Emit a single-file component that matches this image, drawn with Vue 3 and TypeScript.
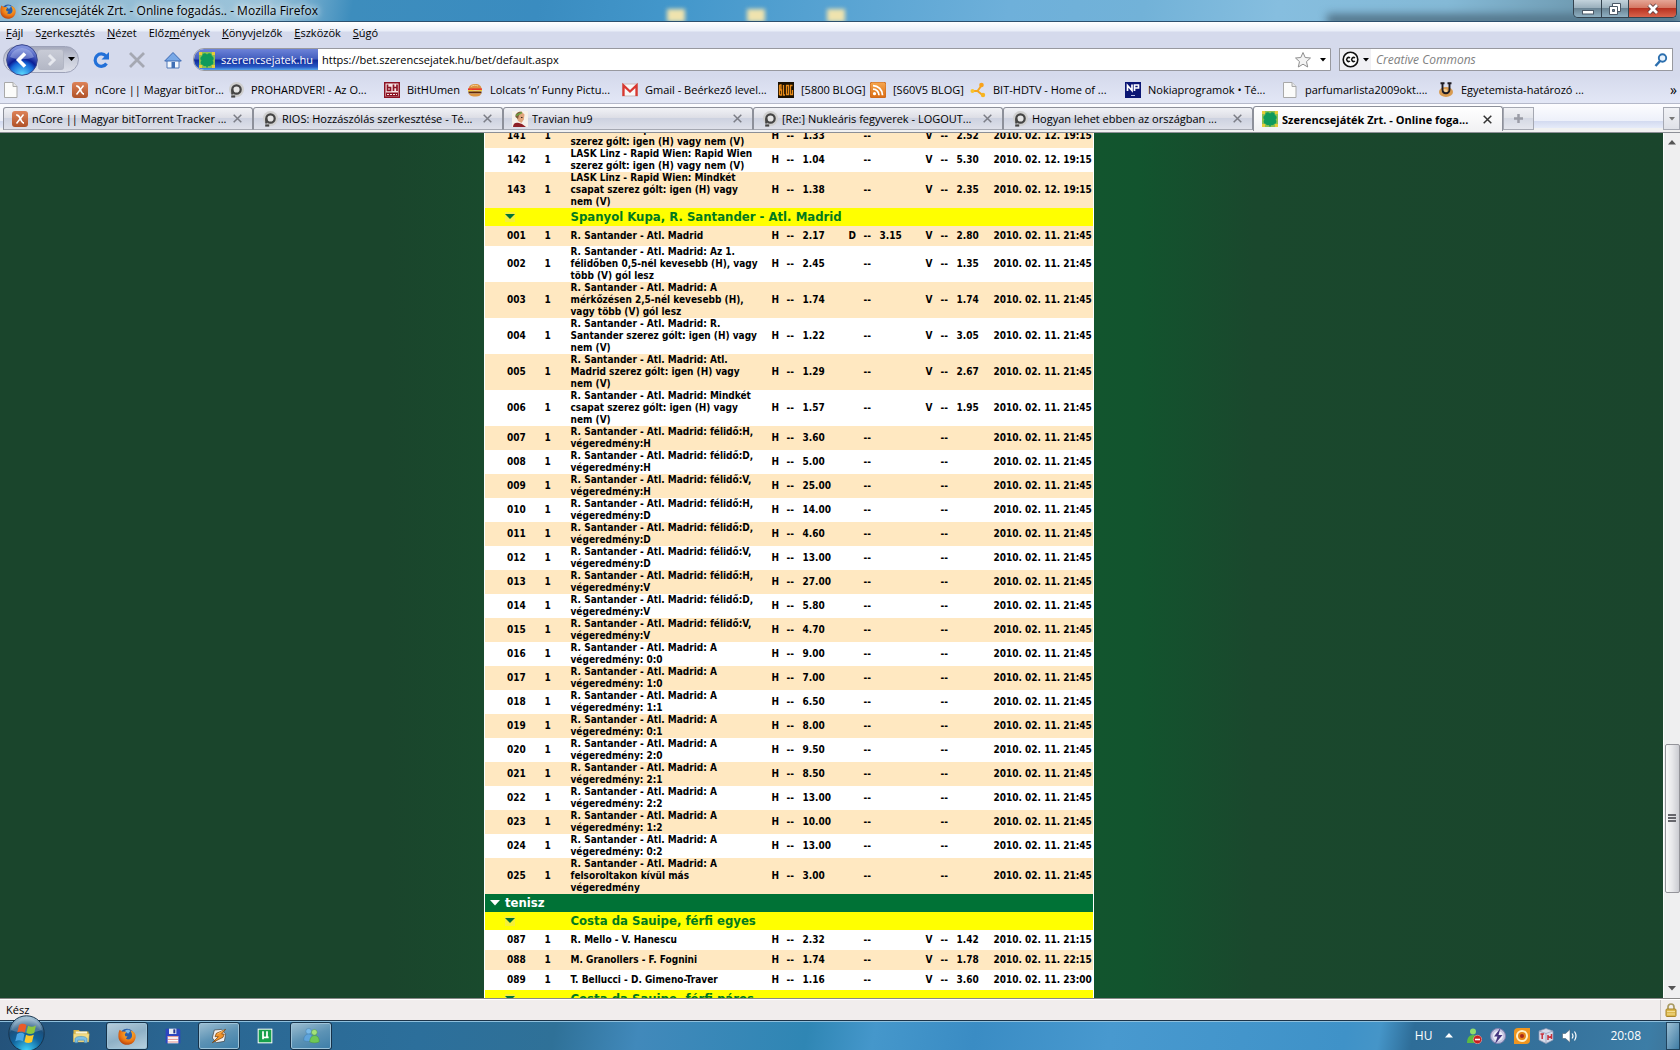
<script setup lang="ts">
import { ref } from 'vue'

interface MenuItem { before: string; key: string; after: string }
interface Bookmark { icon: string; label: string; width: number }
interface Tab { icon: string; label: string; active?: boolean }
interface Row {
  kind: 'bet' | 'league' | 'sport'
  id: string
  name: string
  h?: string
  d?: string
  v?: string
  date?: string
}

const menu: MenuItem[] = [
  { before: '', key: 'F', after: 'ájl' },
  { before: 'S', key: 'z', after: 'erkesztés' },
  { before: '', key: 'N', after: 'ézet' },
  { before: 'Előz', key: 'm', after: 'ények' },
  { before: '', key: 'K', after: 'önyvjelzők' },
  { before: '', key: 'E', after: 'szközök' },
  { before: '', key: 'S', after: 'úgó' },
]

const bookmarks: Bookmark[] = [
  { icon: 'page', label: 'T.G.M.T', width: 69 },
  { icon: 'ncore', label: 'nCore || Magyar bitTor...', width: 156 },
  { icon: 'prohw', label: 'PROHARDVER! - Az O...', width: 156 },
  { icon: 'bithu', label: 'BitHUmen', width: 83 },
  { icon: 'burger', label: 'Lolcats ‘n’ Funny Pictu...', width: 155 },
  { icon: 'gmail', label: 'Gmail - Beérkező level...', width: 156 },
  { icon: 'blog', label: '[5800 BLOG]', width: 92 },
  { icon: 'rss', label: '[S60V5 BLOG]', width: 100 },
  { icon: 'hdtv', label: 'BIT-HDTV - Home of ...', width: 155 },
  { icon: 'np', label: 'Nokiaprogramok • Té...', width: 157 },
  { icon: 'page', label: 'parfumarlista2009okt....', width: 156 },
  { icon: 'ubun', label: 'Egyetemista-határozó ...', width: 156 },
]

const tabs: Tab[] = [
  { icon: 'ncore', label: 'nCore || Magyar bitTorrent Tracker ...' },
  { icon: 'prohw', label: 'RIOS: Hozzászólás szerkesztése - Té...' },
  { icon: 'travian', label: 'Travian hu9' },
  { icon: 'prohw', label: '[Re:] Nukleáris fegyverek - LOGOUT...' },
  { icon: 'prohw', label: 'Hogyan lehet ebben az országban ...' },
  { icon: 'clover', label: 'Szerencsejáték Zrt. - Online foga...', active: true },
]

const linz = '2010. 02. 12. 19:15'
const cup = '2010. 02. 11. 21:45'
const match = 'R. Santander - Atl. Madrid'

function bet(id: string, name: string, h: string, v = '', date = cup, d = ''): Row {
  return { kind: 'bet', id, name, h, d, v, date }
}

const rows: Row[] = [
  bet('141', 'LASK Linz - Rapid Wien: LASK Linz\nszerez gólt: igen (H) vagy nem (V)', '1.33', '2.52', linz),
  bet('142', 'LASK Linz - Rapid Wien: Rapid Wien\nszerez gólt: igen (H) vagy nem (V)', '1.04', '5.30', linz),
  bet('143', 'LASK Linz - Rapid Wien: Mindkét\ncsapat szerez gólt: igen (H) vagy\nnem (V)', '1.38', '2.35', linz),
  { kind: 'league', id: 'l1', name: 'Spanyol Kupa, R. Santander - Atl. Madrid' },
  bet('001', match, '2.17', '2.80', cup, '3.15'),
  bet('002', `${match}: Az 1.\nfélidőben 0,5-nél kevesebb (H), vagy\ntöbb (V) gól lesz`, '2.45', '1.35'),
  bet('003', `${match}: A\nmérkőzésen 2,5-nél kevesebb (H),\nvagy több (V) gól lesz`, '1.74', '1.74'),
  bet('004', `${match}: R.\nSantander szerez gólt: igen (H) vagy\nnem (V)`, '1.22', '3.05'),
  bet('005', `${match}: Atl.\nMadrid szerez gólt: igen (H) vagy\nnem (V)`, '1.29', '2.67'),
  bet('006', `${match}: Mindkét\ncsapat szerez gólt: igen (H) vagy\nnem (V)`, '1.57', '1.95'),
  bet('007', `${match}: félidő:H,\nvégeredmény:H`, '3.60'),
  bet('008', `${match}: félidő:D,\nvégeredmény:H`, '5.00'),
  bet('009', `${match}: félidő:V,\nvégeredmény:H`, '25.00'),
  bet('010', `${match}: félidő:H,\nvégeredmény:D`, '14.00'),
  bet('011', `${match}: félidő:D,\nvégeredmény:D`, '4.60'),
  bet('012', `${match}: félidő:V,\nvégeredmény:D`, '13.00'),
  bet('013', `${match}: félidő:H,\nvégeredmény:V`, '27.00'),
  bet('014', `${match}: félidő:D,\nvégeredmény:V`, '5.80'),
  bet('015', `${match}: félidő:V,\nvégeredmény:V`, '4.70'),
  bet('016', `${match}: A\nvégeredmény: 0:0`, '9.00'),
  bet('017', `${match}: A\nvégeredmény: 1:0`, '7.00'),
  bet('018', `${match}: A\nvégeredmény: 1:1`, '6.50'),
  bet('019', `${match}: A\nvégeredmény: 0:1`, '8.00'),
  bet('020', `${match}: A\nvégeredmény: 2:0`, '9.50'),
  bet('021', `${match}: A\nvégeredmény: 2:1`, '8.50'),
  bet('022', `${match}: A\nvégeredmény: 2:2`, '13.00'),
  bet('023', `${match}: A\nvégeredmény: 1:2`, '10.00'),
  bet('024', `${match}: A\nvégeredmény: 0:2`, '13.00'),
  bet('025', `${match}: A\nfelsoroltakon kívül más\nvégeredmény`, '3.00'),
  { kind: 'sport', id: 's1', name: 'tenisz' },
  { kind: 'league', id: 'l2', name: 'Costa da Sauipe, férfi egyes' },
  bet('087', 'R. Mello - V. Hanescu', '2.32', '1.42', '2010. 02. 11. 21:15'),
  bet('088', 'M. Granollers - F. Fognini', '1.74', '1.78', '2010. 02. 11. 22:15'),
  bet('089', 'T. Bellucci - D. Gimeno-Traver', '1.16', '3.60', '2010. 02. 11. 23:00'),
  { kind: 'league', id: 'l3', name: 'Costa da Sauipe, férfi páros' },
]

const shaded = new Set<string>(
  rows.filter((r) => r.kind === 'bet' && (r.id === '088' || (Number(r.id) % 2 === 1 && !['087', '089'].includes(r.id)))).map((r) => r.id),
)

const address = ref('https://bet.szerencsejatek.hu/bet/default.aspx')
const query = ref('')
</script>

<template>
  <svg class="defs" aria-hidden="true">
    <defs>
      <linearGradient id="gOrange" x1="0" y1="0" x2="0" y2="1"><stop offset="0" stop-color="#dd8258" /><stop offset="1" stop-color="#b05228" /></linearGradient>
      <linearGradient id="gRss" x1="0" y1="0" x2="0" y2="1"><stop offset="0" stop-color="#f7a850" /><stop offset="1" stop-color="#d96a12" /></linearGradient>
      <radialGradient id="gBack" cx="0.5" cy="1" r="0.9"><stop offset="0" stop-color="#5fe2ff" /><stop offset="0.45" stop-color="#1668d8" /><stop offset="0.6" stop-color="#0b1f96" /><stop offset="1" stop-color="#7d8fdc" /></radialGradient>
      <radialGradient id="gOrb" cx="0.5" cy="1" r="1"><stop offset="0" stop-color="#3fd6ff" /><stop offset="0.45" stop-color="#11639c" /><stop offset="0.7" stop-color="#1b4f7c" /><stop offset="1" stop-color="#b8d4e4" /></radialGradient>
      <radialGradient id="gFox" cx="0.6" cy="0.3" r="0.8"><stop offset="0" stop-color="#ffc23a" /><stop offset="0.6" stop-color="#ea7413" /><stop offset="1" stop-color="#a83208" /></radialGradient>
      <symbol id="i-page" viewBox="0 0 16 16"><path d="M1.500 0.500h8.500l4 4v11H1.500z" fill="#fbfbfa" stroke="#a9a9a9" /><path d="M10 .5v4h4" fill="#e6e6e6" stroke="#a9a9a9" /></symbol>
      <symbol id="i-ncore" viewBox="0 0 16 16"><rect width="16" height="16" rx="3" fill="url(#gOrange)" /><path d="M4.200 4.200c2.200-.5 3 .8 4 3.200s1.800 4.600 3.800 4.600" fill="none" stroke="#fff" stroke-width="1.800" /><path d="M11.500 3.500L4.500 12.500" stroke="#fff" stroke-width="1.500" /></symbol>
      <symbol id="i-prohw" viewBox="0 0 16 16"><circle cx="8.500" cy="7.500" r="7.500" fill="#cfcfcf" /><circle cx="8.500" cy="7.500" r="4.200" fill="#e4e4e4" stroke="#454545" stroke-width="2.200" /><path d="M4.300 7.500v5" stroke="#454545" stroke-width="2.200" /><path d="M3.200 14.500h4" stroke="#454545" stroke-width="2.200" /></symbol>
      <symbol id="i-bithu" viewBox="0 0 16 16"><rect width="16" height="16" fill="#8c1223" /><rect x="1.500" y="1.500" width="13" height="13" fill="#f6e4e4" /><path d="M3.500 2.500v6h3v-3h-3M9.500 2.500v6.500M13 2.500v6.500M9.500 5.500h3.500" fill="none" stroke="#8c1223" stroke-width="1.700" /><path d="M2 10.500h12v4H2z" fill="#8c1223" /><path d="M3 12.500h10" stroke="#f6e4e4" stroke-dasharray="2 1" /></symbol>
      <symbol id="i-burger" viewBox="0 0 16 16"><path d="M1.500 7C2 3 5 2 8.500 2s6 2 6 5z" fill="#dc9440" /><path d="M4 4.500c2-1.500 5-1.500 7-.5" stroke="#f4ce90" fill="none" /><path d="M1 7.300h14" stroke="#e8372a" stroke-width="1.800" /><path d="M1 9.300l3-.8 4 1 7-1" stroke="#f3cb34" stroke-width="1.600" fill="none" /><path d="M1.500 10.500h13" stroke="#5e2810" stroke-width="2" /><path d="M2 11.500h12c0 2-2 3-5 3s-7-.5-7-3z" fill="#dc9440" /></symbol>
      <symbol id="i-gmail" viewBox="0 0 16 16"><rect x=".5" y="2" width="15" height="12" fill="#f7f7f7" stroke="#c9b9b9" /><path d="M1.500 14V3.500L8 9.500l6.500-6V14" fill="none" stroke="#d93831" stroke-width="2.300" /></symbol>
      <symbol id="i-blog" viewBox="0 0 16 16"><rect width="16" height="16" fill="#1a1002" /><path d="M1.500 3v10M1.500 3h1.500v4.500h-1.500M1.500 8H3.500v5H1.500M5.500 3v10h1.500M8.500 3.500h2v9h-2zM14.500 3.500h-2v9h2V8" fill="none" stroke="#e78b1a" stroke-width="1.300" /></symbol>
      <symbol id="i-rss" viewBox="0 0 16 16"><rect width="16" height="16" rx="2.500" fill="url(#gRss)" stroke="#c8651c" /><circle cx="4.500" cy="11.700" r="1.600" fill="#fff" /><path d="M3 7.200a6 6 0 0 1 6 6M3 3.700a9.500 9.500 0 0 1 9.500 9.500" fill="none" stroke="#fff" stroke-width="1.800" /></symbol>
      <symbol id="i-hdtv" viewBox="0 0 16 16"><path d="M2.500 9h5L11.500 3.500M7.500 9l5 4" fill="none" stroke="#f5a51d" stroke-width="2" /><circle cx="2.500" cy="9" r="2" fill="#f9c22b" /><circle cx="11.500" cy="3" r="2.300" fill="#f9a21b" /><circle cx="13" cy="13" r="2.200" fill="#f7b521" /></symbol>
      <symbol id="i-np" viewBox="0 0 16 16"><rect width="16" height="16" fill="#0b1674" /><path d="M2.500 9V3.500l4.500 5V2.500M9.500 9V3h4v3h-4" fill="none" stroke="#fff" stroke-width="1.700" /><path d="M6 13.500h4" stroke="#b9bfe8" /></symbol>
      <symbol id="i-ubun" viewBox="0 0 16 16"><ellipse cx="8" cy="10" rx="7" ry="5" fill="#d99b50" /><ellipse cx="6.500" cy="9" rx="3" ry="2" fill="#f2cd92" /><path d="M4.500 1v6.500c0 5 7 5 7 0V1M2.500 1.300h4M9.500 1.300h4" fill="none" stroke="#1e1b22" stroke-width="1.900" /></symbol>
      <symbol id="i-travian" viewBox="0 0 16 16"><rect width="16" height="16" fill="#f6f1ea" /><path d="M4 5c0-3 3-5 6-4l2.500 2.500-.7 5L9.500 12 6 10z" fill="#e0a57c" /><path d="M3.500 6c-.5-3 2-6 6.500-5.200L7 4l-1 4z" fill="#7c5a36" /><path d="M4 4.500l6-3" stroke="#6da044" stroke-width="1.500" /><path d="M1 16c0-4 3-5 6-4l3 1 4 3z" fill="#8e1f26" /><path d="M9 6.500h1.500" stroke="#3a2a20" /></symbol>
      <symbol id="i-clover" viewBox="0 0 16 16"><rect width="16" height="16" fill="#e8cc38" /><path d="M3 0h10v16H3zM0 3h16v10H0z" fill="#8cc050" /><g fill="#0f9a5c"><circle cx="5.700" cy="3.800" r="2.500" /><circle cx="10.300" cy="3.800" r="2.500" /><circle cx="3.900" cy="6.500" r="2.500" /><circle cx="12.100" cy="6.500" r="2.500" /><circle cx="4.200" cy="10.500" r="2.500" /><circle cx="11.800" cy="10.500" r="2.500" /><circle cx="6" cy="12" r="2.300" /><circle cx="10" cy="12" r="2.300" /><rect x="4.500" y="4" width="7" height="8.500" /><path d="M7.200 12h1.600v3.500H7.200z" /></g></symbol>
      <symbol id="i-fox" viewBox="0 0 16 16"><circle cx="8" cy="8" r="6.500" fill="#2a5ea8" /><path d="M6 3.500c2-1.500 4-1 5 0L9 6z" fill="#7db8e4" /><path d="M1.500 2.500L4 4.300c1.500-.8 2.500 0 3.500.2L6 6.500l.5 1.800 2 .2-1.500 1.800c2 1.500 5 .8 5.500-2.300.2-2-.7-3.500-1.500-5C14 3.500 16 6 15.700 9c-.4 4-3.700 6.800-7.700 6.800S.6 12.600.4 8.800C.3 6.200.5 4 1.500 2.500z" fill="url(#gFox)" /></symbol>
      <symbol id="i-explorer" viewBox="0 0 24 24"><path d="M2 4h7l2 2h11v14H2z" fill="#d8b54a" /><path d="M5 6h15v5H5z" fill="#f6f3d8" /><path d="M2 9h21l-1 11H2z" fill="#f3dd86" stroke="#c9a844" stroke-width=".6" /><path d="M4 21v-5c0-2 3-3.500 8-3.500S20 14 20 16v5h-3.500v-3.500h-9V21z" fill="#7cc0e6" stroke="#3f88b8" stroke-width=".8" /></symbol>
      <symbol id="i-floppy" viewBox="0 0 24 24"><path d="M1 1h20l2 2v20H1z" fill="#2c45c0" /><rect x="6" y="1" width="11" height="8" fill="#e9edf3" /><rect x="12.500" y="2" width="3" height="6" fill="#23358f" /><rect x="4" y="12" width="16" height="11" fill="#fff" /><path d="M4 13h16M4 17h16M4 21h16" stroke="#c84b4b" stroke-width="1" /></symbol>
      <symbol id="i-winamp" viewBox="0 0 24 24"><path d="M5 3l11-1 6 7-2 11-12 2-6-7z" fill="#efefef" stroke="#3a3a3a" /><path d="M22 2L8 8l-2 5h5L2 22l16-8 2-5h-4z" fill="#f1932a" stroke="#6b3a0a" /><path d="M19 3.500L9.500 9" stroke="#ffd894" /></symbol>
      <symbol id="i-torrent" viewBox="0 0 24 24"><rect x="1" y="1" width="22" height="22" fill="#fff" /><rect x="2.500" y="2.500" width="19" height="19" fill="#17a04b" /><path d="M9 5v12M9 6v6c0 3 6 3 6 0V5v9h2.500" fill="none" stroke="#fff" stroke-width="2.600" /></symbol>
      <symbol id="i-msn" viewBox="0 0 24 24"><circle cx="8" cy="6" r="4" fill="#79b9e8" stroke="#3b78a8" stroke-width=".6" /><path d="M1 19c0-6 3-9 7-9s6 3 6 9c-4 2-9 2-13 0z" fill="#5fa4dc" stroke="#3b78a8" stroke-width=".6" /><circle cx="16" cy="7.500" r="4" fill="#a4e27a" stroke="#3e8c3a" stroke-width=".6" /><path d="M9.500 21c0-6 3-9 7-9s6.500 3 6.500 9c-4 2-9.500 2-13.500 0z" fill="#6fc856" stroke="#3e8c3a" stroke-width=".6" /></symbol>
    </defs>
  </svg>

  <div class="desktop">
    <header class="titlebar">
      <i class="ghost g1"></i><i class="ghost g2"></i><i class="ghost g3"></i><i class="shade"></i>
      <svg class="ico"><use href="#i-fox" /></svg>
      <h1 class="title">Szerencsejáték Zrt. - Online fogadás.. - Mozilla Firefox</h1>
      <div class="winctl">
        <button class="wc min" aria-label="Kis méret"><svg width="14" height="14" viewBox="0 0 14 14"><rect x="1.500" y="8.500" width="11" height="3.500" fill="#fff" stroke="#4b5866" /></svg></button>
        <button class="wc res" aria-label="Előző méret"><svg width="14" height="14" viewBox="0 0 14 14"><path d="M4.500 1.500h8v8h-8z" fill="#fff" stroke="#4b5866" /><path d="M1.500 4.500h8v8h-8z" fill="#fff" stroke="#4b5866" /><path d="M4.500 7.500h2v2h-2z" fill="#6f8797" stroke="#4b5866" /></svg></button>
        <button class="wc cls" aria-label="Bezárás"><svg width="14" height="14" viewBox="0 0 14 14"><path d="M3 3l8 8M11 3l-8 8" stroke="#5b3a3c" stroke-width="4.500" /><path d="M3 3l8 8M11 3l-8 8" stroke="#fff" stroke-width="2.800" /></svg></button>
      </div>
    </header>

    <nav class="menubar">
      <button v-for="m in menu" :key="m.after" class="menuitem">{{ m.before }}<u>{{ m.key }}</u>{{ m.after }}</button>
    </nav>

    <div class="navbar">
      <div class="pill">
        <button class="back" aria-label="Vissza"><svg width="32" height="32" viewBox="0 0 32 32"><circle cx="16" cy="16" r="15.300" fill="url(#gBack)" stroke="#39468c" /><path d="M4 13a12.500 12.500 0 0 1 24 0c-7 3-17 3-24 0z" fill="#b9c6f2" opacity=".45" /><path d="M19 9.500L12.500 16l6.500 6.500" fill="none" stroke="#fff" stroke-width="3.600" /></svg></button>
        <button class="fwd" aria-label="Előre" disabled><svg width="14" height="16" viewBox="0 0 14 16"><path d="M5 3l5 5-5 5" fill="none" stroke="#e6e8ee" stroke-width="3" /></svg></button>
        <button class="caret" aria-label="Előzmények listája"><svg width="8" height="5" viewBox="0 0 8 5"><path d="M0 0h7L3.500 4z" /></svg></button>
      </div>
      <button class="tool" aria-label="Frissítés"><svg width="18" height="18" viewBox="0 0 18 18"><path d="M14.500 12.500a6.200 6.200 0 1 1-.5-7.500" fill="none" stroke="#2270d8" stroke-width="3.200" /><path d="M17 1v7.500h-7.500z" fill="#2270d8" /></svg></button>
      <button class="tool" aria-label="Leállítás"><svg width="18" height="18" viewBox="0 0 18 18"><path d="M2 2l14 14M16 2L2 16" stroke="#a5a8b2" stroke-width="2.800" /></svg></button>
      <button class="tool" aria-label="Kezdőlap"><svg width="18" height="18" viewBox="0 0 18 18"><path d="M3 9h12v8H3z" fill="#f4f8fd" stroke="#5079b8" /><path d="M9 1.500L17.300 10H.7z" fill="#78a8e6" stroke="#3b68b2" /><rect x="7.500" y="11" width="3.500" height="6" fill="#3f6fb5" /></svg></button>
      <div class="urlbar">
        <button class="identity"><svg class="ico"><use href="#i-clover" /></svg>szerencsejatek.hu</button>
        <input v-model="address" class="addr" aria-label="Cím" />
        <button class="bare star" aria-label="Könyvjelző"><svg width="18" height="18" viewBox="0 0 18 18"><path d="M9 1.500l2.200 5 5.300.5-4 3.600 1.200 5.400L9 13.200 4.300 16l1.200-5.400-4-3.600 5.300-.5z" fill="#f3f3f3" stroke="#8f8f8f" /></svg></button>
        <button class="bare" aria-label="Címek"><svg width="6" height="4" viewBox="0 0 6 4"><path d="M0 0h6L3 3.500z" /></svg></button>
      </div>
      <div class="search">
        <button class="engine" aria-label="Keresőszolgáltatás"><svg width="17" height="17" viewBox="0 0 17 17"><circle cx="8.500" cy="8.500" r="7.300" fill="#fff" stroke="#111" stroke-width="1.600" /><path d="M8 7a2 2 0 1 0 0 3M13 7a2 2 0 1 0 0 3" fill="none" stroke="#111" stroke-width="1.500" /></svg><svg width="6" height="4" viewBox="0 0 6 4"><path d="M0 0h6L3 3.500z" /></svg></button>
        <input v-model="query" class="query" placeholder="Creative Commons" aria-label="Keresés" />
        <button class="bare" aria-label="Keresés indítása"><svg width="14" height="14" viewBox="0 0 14 14"><circle cx="8.500" cy="5" r="3.700" fill="#e8f2fc" stroke="#2c6fae" stroke-width="1.900" /><path d="M6 8l-4.500 5" stroke="#2c6fae" stroke-width="2.500" /></svg></button>
      </div>
    </div>

    <div class="bookmarks">
      <a v-for="b in bookmarks" :key="b.label" href="#" class="bm" :style="{ width: b.width + 'px' }">
        <svg class="ico"><use :href="'#i-' + b.icon" /></svg><span>{{ b.label }}</span>
      </a>
      <button class="more" aria-label="További könyvjelzők">»</button>
    </div>

    <div class="tabs">
      <div v-for="t in tabs" :key="t.label" class="tab" :class="{ active: t.active }">
        <svg class="ico"><use :href="'#i-' + t.icon" /></svg>
        <span class="tlabel">{{ t.label }}</span>
        <button class="close" aria-label="Lap bezárása"><svg width="9" height="9" viewBox="0 0 9 9"><path d="M.7 .7l7.600 7.600M8.300 .7L.7 8.300" stroke="currentColor" stroke-width="1.500" /></svg></button>
      </div>
      <button class="newtab" aria-label="Új lap"><svg width="9" height="9" viewBox="0 0 9 9"><path d="M4.500 0v9M0 4.500h9" stroke="#9a9ca6" stroke-width="2.500" /></svg></button>
      <button class="tablist" aria-label="Lapok listája"><svg width="6" height="4" viewBox="0 0 6 4"><path d="M0 0h6L3 3.500z" fill="#777" /></svg></button>
    </div>

    <main class="viewport">
      <div class="page">
        <div class="side left"></div>
        <table class="odds">
          <colgroup>
            <col class="c-id" /><col class="c-one" /><col class="c-name" />
            <col class="c-sym" /><col class="c-dash" /><col class="c-odd" />
            <col class="c-sym" /><col class="c-dash" /><col class="c-odd" />
            <col class="c-sym" /><col class="c-dash" /><col class="c-last" /><col />
          </colgroup>
          <tbody>
            <tr v-for="r in rows" :key="r.id" :class="[r.kind, { shaded: shaded.has(r.id) }]">
              <template v-if="r.kind === 'bet'">
                <td class="id">{{ r.id }}</td>
                <td class="one">1</td>
                <td class="name">{{ r.name }}</td>
                <td>H</td><td>--</td><td>{{ r.h }}</td>
                <td>{{ r.d ? 'D' : '' }}</td><td>--</td><td>{{ r.d }}</td>
                <td>{{ r.v ? 'V' : '' }}</td><td>--</td><td>{{ r.v }}</td>
                <td>{{ r.date }}</td>
              </template>
              <template v-else-if="r.kind === 'league'">
                <td colspan="2" class="toggle"><span class="box"><svg width="10" height="6" viewBox="0 0 10 6"><path d="M0 0h10L5 5z" fill="#007236" /></svg></span></td>
                <td colspan="11">{{ r.name }}</td>
              </template>
              <td v-else colspan="13"><svg width="10" height="6" viewBox="0 0 10 6"><path d="M0 0h10L5 5.500z" fill="#fff" /></svg>{{ r.name }}</td>
            </tr>
          </tbody>
        </table>
        <div class="side right"></div>
      </div>
      <div class="scroll">
        <svg width="8" height="5" viewBox="0 0 8 5"><path d="M0 4.500L4 0l4 4.500z" fill="#555" /></svg>
        <div class="gap upper"></div>
        <div class="thumb"><i></i><i></i><i></i></div>
        <div class="gap lower"></div>
        <svg width="8" height="5" viewBox="0 0 8 5"><path d="M0 0h8L4 4.500z" fill="#555" /></svg>
      </div>
    </main>

    <footer class="status">
      <span>Kész</span>
      <span class="lock"><svg width="12" height="14" viewBox="0 0 12 14"><path d="M3 7V4a3 3 0 0 1 6 0v3" fill="none" stroke="#a89a62" stroke-width="1.700" /><rect x="1" y="6" width="10" height="7.500" rx="1" fill="#dcb84c" stroke="#a8842a" /><path d="M2 8.500h8M2 11h8" stroke="#f3dd92" /></svg></span>
    </footer>

    <div class="taskbar">
      <button class="start" aria-label="Start"><svg width="37" height="37" viewBox="0 0 37 37"><circle cx="18.500" cy="18.500" r="17.700" fill="url(#gOrb)" stroke="#16344e" /><path d="M3 15a16 16 0 0 1 31 0c-8 3-22 4-31 0z" fill="#fff" opacity=".22" /><path d="M11 10c3-2 5-1.500 7.500 0l-1.700 7.500c-2.500-1.500-4.800-1.500-7.500 0z" fill="#ea5b2a" /><path d="M20 10.700c3 1.500 5 1.300 8-.2l-1.800 7.500c-3 1.500-5.300 1.300-7.800 0z" fill="#8cc63e" /><path d="M9 19c3-1.700 5-1.500 7.500 0l-1.700 7.300c-2.500-1.500-4.800-1.500-7.500 0z" fill="#4aa5e4" /><path d="M18 19.700c2.500 1.500 5 1.300 7.800 0L24 27c-3 1.500-5 1.300-7.500 0z" fill="#fbc82c" /></svg></button>
      <div class="apps">
        <button class="app" aria-label="Intéző"><svg width="18" height="18"><use href="#i-explorer" /></svg></button>
        <button class="app open front" aria-label="Firefox"><svg width="18" height="18"><use href="#i-fox" /></svg></button>
        <button class="app" aria-label="Lemez"><svg width="16" height="16"><use href="#i-floppy" /></svg></button>
        <button class="app open" aria-label="Winamp"><svg width="16" height="16"><use href="#i-winamp" /></svg></button>
        <button class="app" aria-label="Torrent"><svg width="16" height="16"><use href="#i-torrent" /></svg></button>
        <button class="app open" aria-label="Messenger"><svg width="17" height="17"><use href="#i-msn" /></svg></button>
      </div>
      <div class="tray">
        <span class="lang">HU</span>
        <svg class="up" width="8" height="5" viewBox="0 0 8 5"><path d="M0 4.500L4 0l4 4.500z" fill="#fff" /></svg>
        <svg width="16" height="16" viewBox="0 0 16 16"><circle cx="7" cy="3.500" r="3" fill="#8fdc6c" /><path d="M1 15c0-5 2-8 6-8s6 3 6 8z" fill="#5cba42" /><circle cx="11.500" cy="11.500" r="4.200" fill="#c91f1f" stroke="#f2b2b2" stroke-width=".6" /><path d="M9 11.500h5" stroke="#fff" stroke-width="1.600" /></svg>
        <svg width="16" height="16" viewBox="0 0 16 16"><circle cx="8" cy="8" r="7.500" fill="#c3c4e0" stroke="#7f80b0" /><circle cx="8" cy="8" r="5" fill="#ececf8" /><path d="M10.500 0L4 8.500h3.500L5 16l7.500-9H8.500z" fill="#43347e" /></svg>
        <svg width="16" height="16" viewBox="0 0 16 16"><path d="M4 0h12v12a4 4 0 0 1-4 4H0V4a4 4 0 0 1 4-4z" fill="#ef951f" /><circle cx="8" cy="8" r="6" fill="#fff0c8" /><circle cx="8" cy="8" r="4" fill="#e68417" /><circle cx="8" cy="8" r="2" fill="#a8281a" /></svg>
        <svg width="16" height="16" viewBox="0 0 16 16"><path d="M8 .5l7 2.500v9l-7 3.500L1 12V3z" fill="#d8dcea" stroke="#8e96b4" stroke-width=".7" /><path d="M1 3l7 2.500L15 3M8 5.500v10" fill="none" stroke="#8e96b4" stroke-width=".7" /><path d="M2.500 6h3.500M4.200 6v5M10 7v5M13.500 6v5M10 9.500l3.500-1" fill="none" stroke="#c8323c" stroke-width="1.500" /></svg>
        <svg width="16" height="16" viewBox="0 0 16 16"><path d="M.5 5.500h3L8 1.500v13l-4.500-4h-3z" fill="#fff" stroke="#4a6070" stroke-width=".6" /><path d="M10 5.500c1.200 1.500 1.200 3.500 0 5M12.500 3.500c2 3 2 6 0 9" fill="none" stroke="#fff" stroke-width="1.200" /></svg>
        <time class="clock">20:08</time>
        <button class="peek" aria-label="Asztal megjelenítése"></button>
      </div>
    </div>
  </div>
</template>

<style>
html,
body {
  margin: 0;
  overflow: hidden;
}
</style>

<style scoped>
* { box-sizing: border-box; }
button { border: 0; padding: 0; margin: 0; background: none; font: inherit; color: inherit; display: flex; align-items: center; justify-content: center; }
svg { display: block; flex: none; }
.defs { position: absolute; width: 0; height: 0; }
.ico { width: 16px; height: 16px; }

.desktop {
  display: flex;
  flex-direction: column;
  height: 100vh;
  font-family: "Open Sans", "Noto Sans", sans-serif;
  font-size: 11px;
  color: #000;
  white-space: nowrap;
}

.titlebar {
  position: relative;
  display: flex;
  align-items: center;
  height: 22px;
  border-bottom: 1px solid #2c506e;
  background: linear-gradient(100deg, #8db7d0 0, #9cc4da 16%, #3d8dbd 21%, #3a8cc0 32%, #4397cb 40%, #6eb0da 60%, #72b2d8 68%, #86bedf 76%, #84b9d6 86%, #6f9bb2 94%, #6f98ad 100%);
  overflow: hidden;
}
.titlebar .ico, .title, .winctl { position: relative; }
.title { margin: 0 0 0 5px; font-size: 12px; font-weight: 400; line-height: 20px; text-shadow: 0 0 6px #fff, 0 0 10px #fff; }
.ghost { position: absolute; top: 9px; width: 18px; height: 13px; background: #efe3ae; filter: blur(2px); }
.g1 { left: 40%; margin-left: -5px; }
.g2 { left: 44%; margin-left: 8px; }
.g3 { left: 49%; margin-left: 4px; }
.shade { position: absolute; top: 14px; right: 0; width: 21%; height: 12px; background: #53758a; filter: blur(4px); }
.winctl { display: flex; align-self: flex-start; margin: 0 3px 0 auto; height: 18px; border: 1px solid #33424e; border-top: 0; border-radius: 0 0 5px 5px; overflow: hidden; }
.wc { height: 17px; border-right: 1px solid #33424e; background: linear-gradient(#c3d3dc 0, #9bb0bd 45%, #6a8494 50%, #8fb0c2 100%); }
.min { width: 28px; }
.res { width: 27px; }
.cls { width: 47px; border-right: 0; background: linear-gradient(#e5a696 0, #d57964 45%, #b93220 50%, #d9644c 100%); }

.menubar { display: flex; align-items: center; gap: 12px; height: 21px; padding-left: 6px; background: linear-gradient(#fff 0, #e9eef8 9px, #d5daec 10px); line-height: 20px; }
.navbar { display: flex; align-items: center; height: 33px; padding: 0 7px 0 3px; background: #d5daec; }
.pill { display: flex; align-items: center; width: 76px; height: 27px; border: 1px solid #9da2b8; border-radius: 14px; background: linear-gradient(#a5a9bc, #c9cdda 50%, #dde0ea); }
.back { width: 32px; margin-left: 2px; }
.fwd { width: 26px; height: 21px; border: 1px solid #b2b6c4; border-left: 0; border-radius: 3px; background: linear-gradient(#c8cbd6, #b4b8c6); }
.caret { margin-left: 4px; }
.tool { width: 18px; margin-left: 18px; }
.pill + .tool { margin-left: 13px; }
.tool + .urlbar { margin-left: 11px; }
.urlbar { display: flex; flex: 1; align-items: center; height: 23px; border: 1px solid #98999f; border-radius: 11px 0 0 11px; background: #fff; }
.identity { width: 124px; height: 21px; gap: 6px; border-radius: 10px 0 0 10px; color: #fff; background: linear-gradient(#6d83d8 0, #4560c0 45%, #0f2c9c 55%, #2858c4 85%, #58a8ec 100%); }
.addr, .query { flex: 1; min-width: 0; height: 20px; border: 0; padding: 0 0 0 4px; outline: 0; background: none; font: inherit; }
.bare { margin-right: 4px; }
.star { margin-right: 8px; }
.search { display: flex; align-items: center; width: 20%; height: 23px; margin-left: 8px; border: 1px solid #98999f; background: #fff; }
.engine { width: 31px; height: 21px; gap: 4px; background: #f0f0f4; }
.query { padding-left: 5px; font-size: 12px; }
.query::placeholder { color: #808080; font-style: italic; opacity: 1; }

.bookmarks { display: flex; align-items: center; height: 28px; padding: 0 3px; border-bottom: 1px solid #b5b9ca; background: linear-gradient(#d5daec, #e3e7f6); }
.bm { display: flex; align-items: center; gap: 7px; color: #000; text-decoration: none; }
.more { margin-left: auto; font-size: 14px; }

.tabs { display: flex; align-items: flex-end; height: 29px; padding-left: 3px; border-bottom: 1px solid #8c8f96; background: linear-gradient(#fdfdff 0, #edf0fa 60%, #d3daf0 61%, #e6ebf9 86%, #f1f1f1 87%); }
.tab { display: flex; flex: 0 1 250px; align-items: center; min-width: 0; height: 23px; margin-bottom: 2px; padding: 0 10px 0 8px; border: 1px solid #8d909a; border-bottom-color: #a5a8b2; border-radius: 3px 3px 0 0; background: linear-gradient(#f1f2f6 0, #dcdde5 48%, #cdd2e0 50%, #dee0e9 100%); }
.tab.active { height: 25px; margin-bottom: 1px; border-bottom: 0; background: linear-gradient(#fff, #f1f1f3); font-weight: 700; }
.tlabel { flex: 1; min-width: 0; margin-left: 4px; overflow: hidden; }
.close { color: #7b7d86; }
.active .close { color: #333; }
.newtab { width: 31px; height: 23px; margin-bottom: 2px; border: 1px solid #a5a8b2; background: linear-gradient(#f1f2f6 0, #e2e4ea 48%, #d5d9e4 50%, #e4e6ed 100%); }
.tablist { width: 17px; height: 23px; margin: 0 0 2px auto; border: 1px solid #a5a8b2; background: linear-gradient(#f1f2f6, #dfe1e8); }

.viewport { display: flex; flex: 1; min-height: 0; overflow: hidden; background: #1a452c; }
.page { display: flex; flex: 1; justify-content: center; overflow: hidden; }
.side { flex: 1; }
.left { flex-grow: 484; background: linear-gradient(90deg, #1a452c 80%, #194a2d); }
.right { flex-grow: 569; background: linear-gradient(90deg, #12552e 0, #12542e 8%, #1a482d 28%, #1a452c 100%); }
.odds { flex: none; width: 610px; align-self: flex-start; margin-top: -9px; border-left: 1px solid #fff; border-right: 1px solid #fff; border-collapse: collapse; table-layout: fixed; background: #fff; font: 700 10px/12px "DejaVu Sans Condensed", "DejaVu Sans", sans-serif; }
.odds td { height: 20px; padding: 0; }
.c-id { width: 55px; }
.c-one { width: 31px; }
.c-name { width: 201px; }
.c-sym { width: 15px; }
.c-dash { width: 16px; }
.c-odd { width: 46px; }
.c-last { width: 37px; }
.odds .id { padding-left: 22px; }
.odds .one { padding-left: 5px; }
.name { white-space: pre-line; }
.shaded { background: #ffe8c1; }
.odds .league td, .odds .sport td { height: 18px; font-size: 13px; line-height: 18px; }
.league { background: #ff0; color: #007a1e; }
.odds .toggle { padding-left: 20px; }
.box { display: flex; width: 10px; height: 10px; align-items: center; justify-content: center; background: #f6f03a; }
.sport { background: #007236; color: #fff; }
.sport svg { display: inline-block; margin: 0 5px 2px 5px; vertical-align: middle; }

.scroll { display: flex; flex-direction: column; align-items: center; width: 17px; padding: 7px 1px; border-left: 1px solid #fff; background: #efeff0; }
.gap.upper { flex: 600; }
.gap.lower { flex: 93; }
.thumb { display: flex; flex: 148; flex-direction: column; align-items: center; justify-content: center; gap: 1px; width: 15px; border: 1px solid #94949a; border-radius: 2px; background: linear-gradient(90deg, #fafafa, #e6e6e9 50%, #cbccd2); }
.thumb i { width: 8px; height: 2px; background: #66666c; }

.status { display: flex; align-items: center; justify-content: space-between; height: 22px; padding-left: 6px; border-top: 1px solid #888; background: #f1eded; box-shadow: inset 0 1px #fff; }
.lock { display: flex; align-items: center; justify-content: center; width: 20px; height: 20px; border-left: 1px solid #c9c5c5; }

.taskbar { display: flex; align-items: center; height: 30px; border-top: 1px solid #1c3348; box-shadow: inset 0 1px #8fc0dd; background: linear-gradient(100deg, #24527a 0, #2a6591 10%, #2c6f9b 25%, #2f7198 33%, #4189bb 38%, #2f86b4 48%, #4597cb 52%, #3a8cc4 58%, #4899cf 66%, #3f92c8 80%, #4595c8 82%, #2e6d98 84%, #35719b 92%, #3c7da6 98%, #3f7396 100%); }
.start { align-self: flex-end; margin-left: 8px; }
.start svg { margin-bottom: -2px; }
.apps { display: flex; gap: 4px; margin-left: 15px; }
.app { width: 42px; height: 28px; }
.open { border: 1px solid #16324a; border-radius: 3px; background: linear-gradient(160deg, #9fbfd2, #5d93b5 50%, #3c7da8); box-shadow: inset 0 0 0 1px #9cc2d8; }
.front { background: linear-gradient(160deg, #b9cedb, #8eb0c6 50%, #b9d2e0); }
.tray { display: flex; gap: 8px; align-items: center; height: 29px; margin-left: auto; color: #fff; font-size: 12px; }
.lang { margin-right: 5px; }
.up { margin-right: 5px; }
.clock { margin-left: 24px; }
.peek { width: 14px; height: 28px; margin-left: 17px; border: 1px solid #20435e; background: linear-gradient(120deg, #9dc0d4, #3f7ba4); }
</style>
